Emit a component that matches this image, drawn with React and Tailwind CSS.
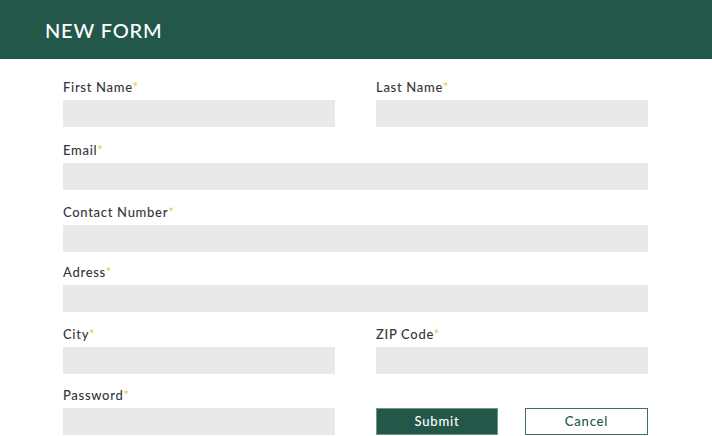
import React from 'react';

const Label = ({ children }) => (
  <label className="block h-4 mb-[5px] text-[13px] leading-4 tracking-[0.7px] font-medium text-[#34373b]">
    {children}
    <span className="text-[#f3c63f]">*</span>
  </label>
);

const Field = ({ label, type = 'text' }) => (
  <div>
    <Label>{label}</Label>
    <input type={type} className="block w-full h-[27px] bg-[#e9e9e9] outline-none px-2 text-sm" />
  </div>
);

const App = () => {
  return (
    <div className="w-[712px] h-[436px] bg-white overflow-hidden" style={{ fontFamily: 'Lato, "Noto Sans", sans-serif' }}>
      <header className="h-[59px] bg-[#23574a] flex items-center pl-[45px]">
        <h1 className="text-white text-[20px] font-medium tracking-[0.8px] pt-[1px]">NEW FORM</h1>
      </header>

      <form className="ml-[63px] w-[585px] pt-[20px]" onSubmit={(e) => e.preventDefault()}>
        <div className="grid grid-cols-2 gap-x-[41px]">
          <Field label="First Name" />
          <Field label="Last Name" />
        </div>
        <div className="mt-[15px]">
          <Field label="Email" type="email" />
        </div>
        <div className="mt-[14px]">
          <Field label="Contact Number" />
        </div>
        <div className="mt-[12px]">
          <Field label="Adress" />
        </div>
        <div className="mt-[14px] grid grid-cols-2 gap-x-[41px]">
          <Field label="City" />
          <Field label="ZIP Code" />
        </div>
        <div className="mt-[13px] grid grid-cols-2 gap-x-[41px] items-end">
          <Field label="Password" type="password" />
          <div className="flex justify-between">
            <button type="submit" className="w-[122px] h-[27px] bg-[#23574a] border border-[#6e978b] text-white text-[13px] font-medium tracking-[0.8px]">
              Submit
            </button>
            <button type="button" className="w-[123px] h-[27px] bg-white border border-[#3f6f62] text-[#23574a] text-[13px] font-medium tracking-[0.8px]">
              Cancel
            </button>
          </div>
        </div>
      </form>
    </div>
  );
};

export default App;
